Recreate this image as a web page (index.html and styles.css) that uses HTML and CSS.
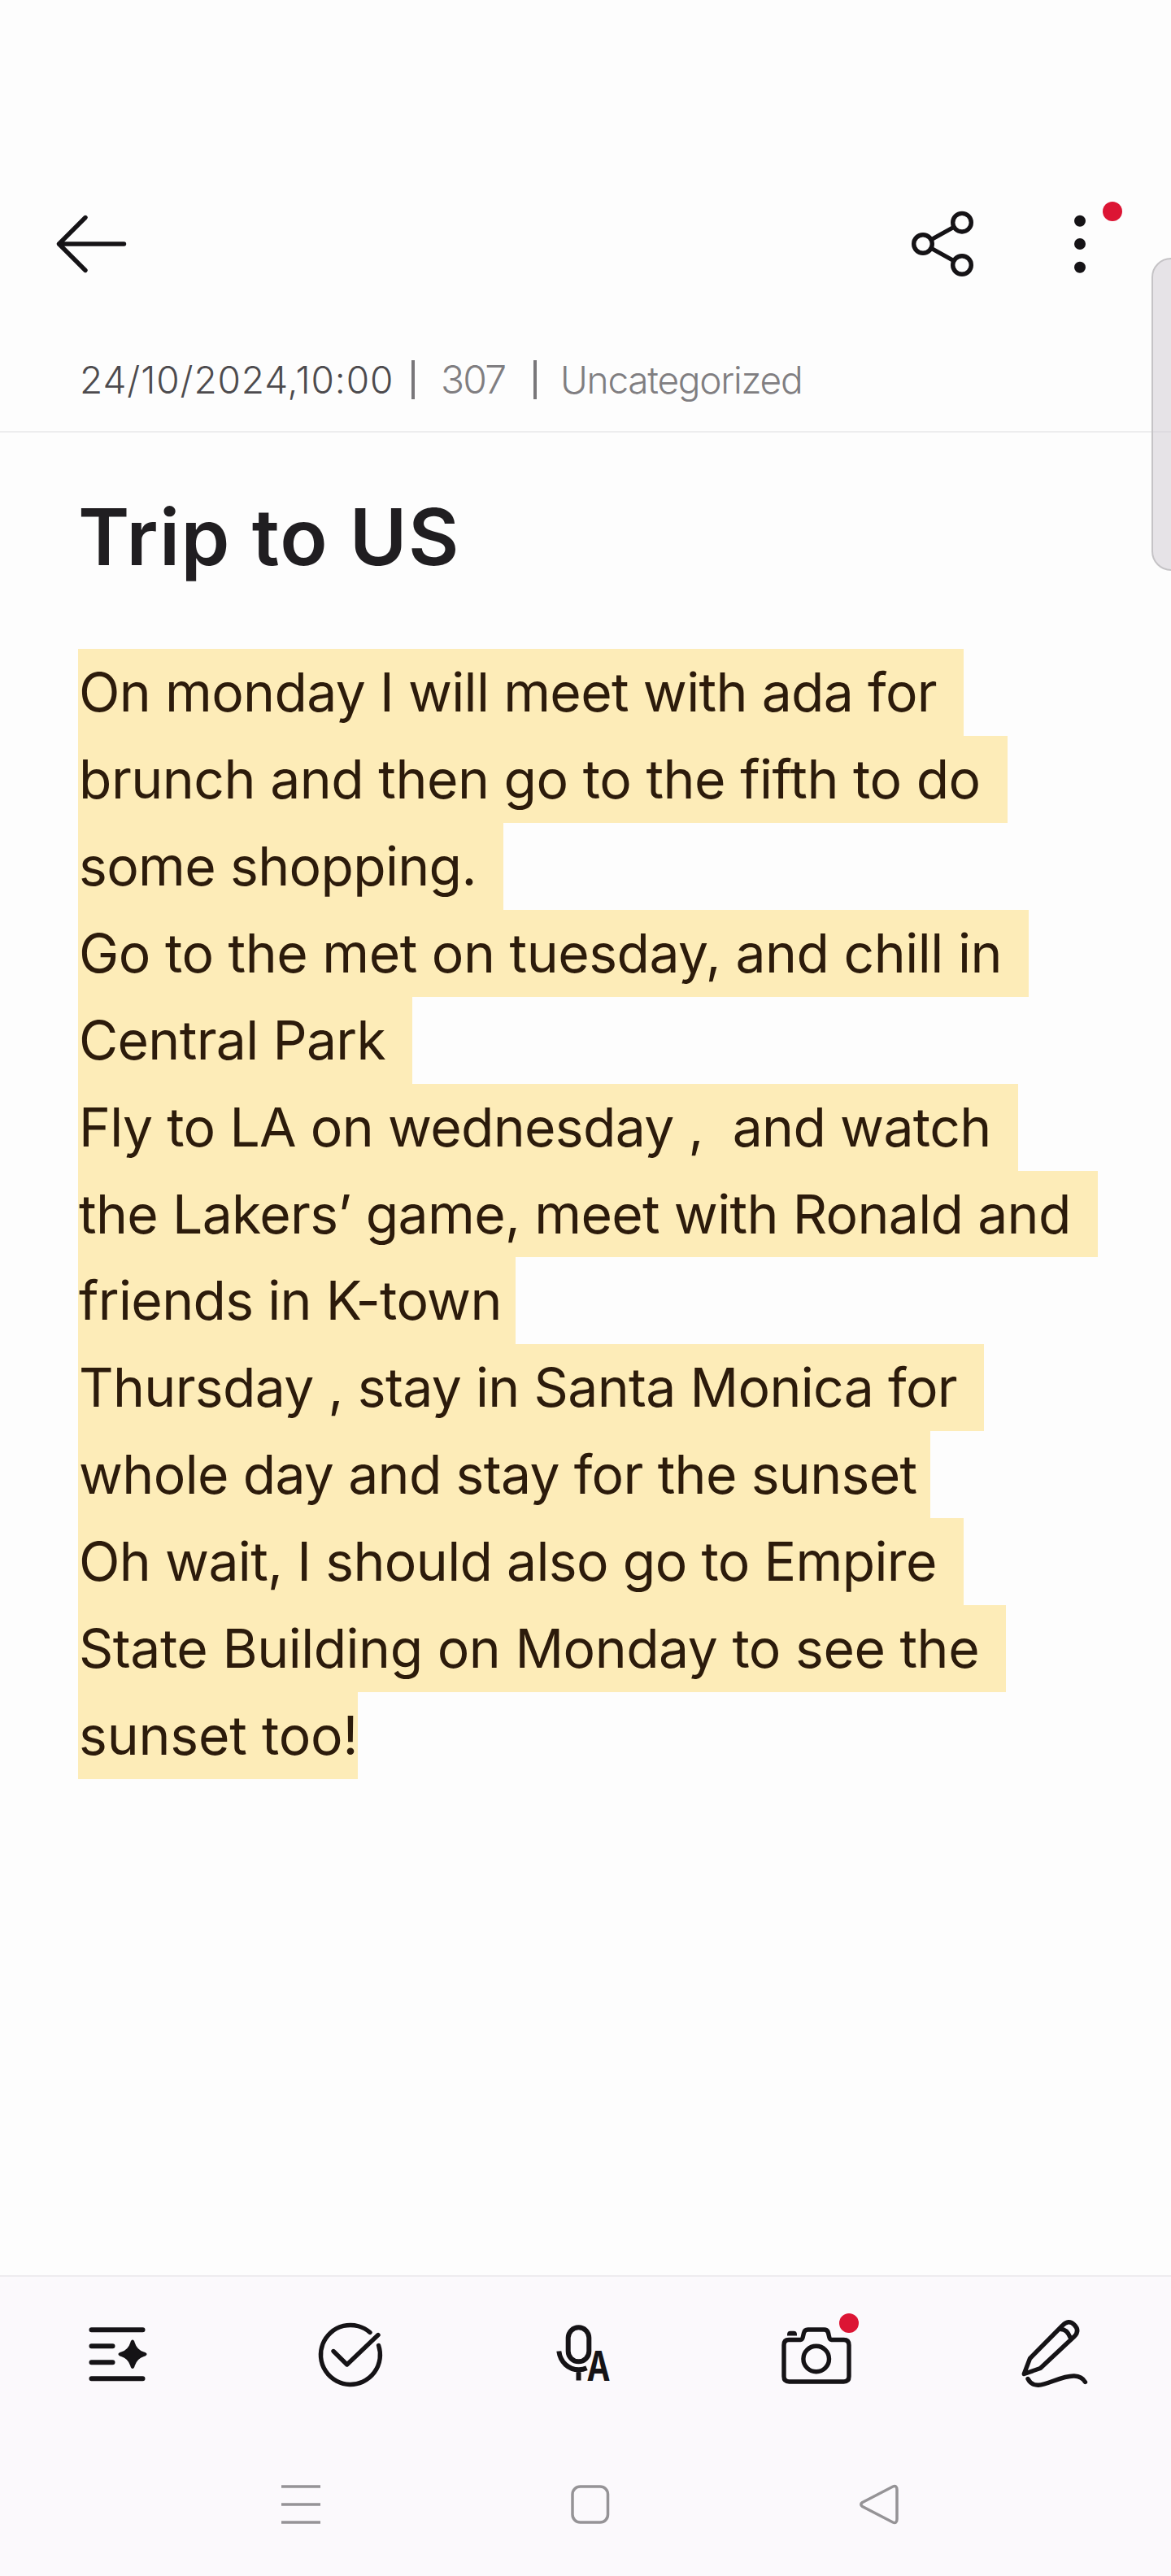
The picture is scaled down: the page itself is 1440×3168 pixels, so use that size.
FILE: index.html
```html
<!DOCTYPE html>
<html lang="en">
<head>
    <meta charset="UTF-8">
    <meta name="viewport" content="width=device-width, initial-scale=1.0">
    <title>Trip to US</title>
    <link rel="stylesheet" href="styles.css">
</head>
<body>

    <div class="screen">
        <!-- Top bar -->
        <header class="top-bar">
            <button class="icon-button" aria-label="Back">
                <svg class="icon" viewBox="0 0 96 96">
                    <path class="line" d="M44 17.5 L11.5 50 L44 82.5 M11.5 50 H91.5" />
                </svg>
            </button>
            <div class="top-actions">
                <button class="icon-button" aria-label="Share">
                    <svg class="icon" viewBox="0 0 96 96">
                        <circle class="line" cx="24" cy="50" r="11.3" />
                        <circle class="line" cx="72" cy="23.7" r="11.3" />
                        <circle class="line" cx="72" cy="76" r="11.3" />
                        <path class="line" d="M34.5 44.5 L61.5 29.5 M34.5 55.5 L61.5 70.5" />
                    </svg>
                </button>
                <button class="icon-button" aria-label="More">
                    <svg class="icon" viewBox="0 0 96 96">
                        <circle cx="48" cy="21.7" r="7" />
                        <circle cx="48" cy="50" r="7" />
                        <circle cx="48" cy="78.7" r="7" />
                    </svg>
                    <span class="badge badge-more"></span>
                </button>
            </div>
        </header>

        <!-- Note info -->
        <div class="note-info">
            <span class="date">24/10/2024,10:00</span>
            <span class="separator"></span>
            <span class="count">307</span>
            <span class="separator"></span>
            <span class="category">Uncategorized</span>
        </div>

        <!-- Note content -->
        <main class="note">
            <h1>Trip to US</h1>
            <div class="note-text">
                <span>On monday I will meet with ada for</span>
                <span class="wide">brunch and then go to the fifth to do</span>
                <span>some shopping.</span>
                <span class="wide">Go to the met on tuesday, and chill in</span>
                <span>Central Park</span>
                <span>Fly to LA on wednesday ,&nbsp; and watch</span>
                <span>the Lakers’ game, meet with Ronald and</span>
                <span class="short">friends in K-town</span>
                <span>Thursday , stay in Santa Monica for</span>
                <span class="short">whole day and stay for the sunset</span>
                <span>Oh wait, I should also go to Empire</span>
                <span class="wide">State Building on Monday to see the</span>
                <span class="last">sunset too!</span>
            </div>
        </main>

        <!-- Bottom tools and system navigation -->
        <footer class="bottom">
            <div class="tools">
                <button class="icon-button" aria-label="Smart layout">
                    <svg class="icon bold" viewBox="0 0 96 96">
                        <path class="line" d="M16.5 17.3 H79.5 M16.5 37.3 H42.5 M16.5 57.3 H42.5 M16.5 77.3 H79.5" />
                        <path d="M67 29.5 Q69 29.5 69.7 33 Q72.5 42 81 44.6 Q84.5 45.5 84.5 47.3 Q84.5 49 81 50 Q72.5 52.6 69.7 61.6 Q69 65 67 65 Q65 65 64.3 61.6 Q61.5 52.6 53 50 Q49.5 49 49.5 47.3 Q49.5 45.5 53 44.6 Q61.5 42 64.3 33 Q65 29.5 67 29.5 Z" />
                    </svg>
                </button>
                <button class="icon-button" aria-label="Checklist">
                    <svg class="icon" viewBox="0 0 96 96">
                        <path class="line" d="M71 20.5 A36.5 36.5 0 1 0 81.6 36.5" />
                        <path class="line" d="M26 43.5 L42.7 60 L81 23.5" />
                    </svg>
                </button>
                <button class="icon-button" aria-label="Voice to text">
                    <svg class="icon bold" viewBox="0 0 96 96">
                        <rect class="line" x="26.7" y="14.3" width="25.6" height="42" rx="12.8" />
                        <path class="line flat" d="M15.3 43.5 C17 57 27 66.3 40 66.3 Q45 66.3 49.5 64.3 M39.5 66 V79.5" />
                        <text class="mic-letter" x="49.5" y="79.5" textLength="29" lengthAdjust="spacingAndGlyphs">A</text>
                    </svg>
                </button>
                <button class="icon-button" aria-label="Camera">
                    <svg class="icon" viewBox="0 0 96 96">
                        <path class="line" d="M10 29.5 H24.5 Q26.5 29.5 27.2 26.5 L28.5 21 Q29.5 17 33.5 17 H53.5 Q57.5 17 58.5 21 L59.8 26.5 Q60.5 29.5 62.5 29.5 H77.5 Q84 29.5 84 36 V74.5 Q84 81 77.5 81 H10.5 Q4 81 4 74.5 V36 Q4 29.5 10 29.5 Z" />
                        <circle class="line" cx="43.7" cy="53" r="15.8" />
                        <path d="M8 24.5 V23 Q8 18.7 12 18.7 H16 Q20 18.7 20 23 V24.5 Z" />
                    </svg>
                    <span class="badge badge-camera"></span>
                </button>
                <button class="icon-button" aria-label="Handwriting">
                    <svg class="icon" viewBox="0 0 96 96">
                        <path class="line" d="M11.3 71.5 L18.5 52.5 L58.5 12 Q66 4 73 11 Q80 18 73.5 25 L31.3 64.5 Z" />
                        <path class="line" d="M56.5 16.5 Q64 16.5 68 26.5" />
                        <path class="line" d="M16 77.5 Q20 85.5 29 85.3 C41 84.5 58 73.5 73 74 Q82.5 74.5 86.5 81.5" />
                    </svg>
                </button>
            </div>
            <nav class="system-nav">
                <svg class="nav-icon" viewBox="0 0 60 60">
                    <path d="M6 8 H54 M6 30 H54 M6 52 H54" />
                </svg>
                <svg class="nav-icon" viewBox="0 0 60 60">
                    <rect x="8" y="8" width="43.5" height="44" rx="9.5" />
                </svg>
                <svg class="nav-icon" viewBox="0 0 60 60">
                    <path d="M8.5 27.5 L46 8 Q51 6 51 12 V48 Q51 54 46 52 L8.5 32.5 Q5 30 8.5 27.5 Z" />
                </svg>
            </nav>
        </footer>

        <div class="scroll-thumb"></div>
    </div>

</body>
</html>
```
FILE: styles.css
```css
/* General Styles */
* {
    box-sizing: border-box;
}

body {
    margin: 0;
    background-color: #fdfdfd;
    color: #201e21;
    font-family: Inter, "Liberation Sans", sans-serif;
}

.screen {
    position: relative;
    display: flex;
    flex-direction: column;
    width: 1440px;
    height: 3168px;
    overflow: hidden;
}

/* Icons */
.icon-button {
    position: relative;
    width: 96px;
    height: 96px;
    padding: 0;
    border: none;
    background: none;
}

.icon {
    display: block;
    width: 96px;
    height: 96px;
    fill: #151316;
}

.line {
    fill: none;
    stroke: #151316;
    stroke-width: 5.4;
    stroke-linecap: round;
    stroke-linejoin: round;
}

.bold .line {
    stroke-width: 6;
}

.bold .flat {
    stroke-linecap: butt;
}

.mic-letter {
    font-family: Inter, sans-serif;
    font-size: 51px;
    font-weight: 700;
}

.badge {
    position: absolute;
    width: 24px;
    height: 24px;
    border-radius: 50%;
    background-color: #dc1534;
}

.badge-more {
    top: -2px;
    right: -4px;
}

.badge-camera {
    top: -3px;
    right: 0;
}

/* Top bar */
.top-bar {
    display: flex;
    justify-content: space-between;
    align-items: flex-end;
    height: 346px;
    padding: 0 64px 0 61px;
}

.top-actions {
    display: flex;
    gap: 73px;
}

/* Note info */
.note-info {
    display: flex;
    align-items: center;
    height: 186px;
    padding: 58px 98px 0;
    border-bottom: 2px solid #ededee;
    color: #807e81;
    font-size: 46px;
    font-weight: 350;
    line-height: 1;
}

.date {
    width: 388px;
    color: #4d4b4e;
    letter-spacing: 0.9px;
}

.separator {
    width: 4px;
    height: 48px;
    background-color: #79777a;
}

.date + .separator {
    margin: 0 32px 0 20px;
}

.count {
    width: 81px;
    font-size: 48px;
    letter-spacing: -1.8px;
}

.count + .separator {
    margin: 0 29px 0 33px;
}

.category {
    letter-spacing: -1.25px;
}

/* Note content */
.note {
    flex: 1;
    padding: 61px 90px 0 96px;
}

h1 {
    margin: 0 0 71px;
    font-size: 96px;
    font-weight: 600;
    line-height: 134px;
    letter-spacing: 1.5px;
}

.note-text {
    display: flex;
    flex-direction: column;
    align-items: flex-start;
    color: #2c1b0b;
    font-size: 66px;
    line-height: 106.92px;
    letter-spacing: -0.66px;
    white-space: nowrap;
}

.note-text span {
    padding: 0 33px 0 1px;
    background-color: #fdecb8;
}

.note-text .wide {
    letter-spacing: -0.48px;
}

.note-text .short {
    padding-right: 17px;
}

.note-text .last {
    padding-right: 0;
    letter-spacing: -0.2px;
}

/* Bottom bar */
.bottom {
    height: 370px;
    padding-top: 48px;
    border-top: 2px solid #eeecef;
    background-color: #fbf9fc;
}

.tools {
    display: grid;
    grid-template-columns: repeat(5, 288px);
    justify-items: center;
}

.system-nav {
    display: flex;
    justify-content: space-between;
    padding: 106px 328px 0 340px;
}

.nav-icon {
    width: 60px;
    height: 60px;
    fill: none;
    stroke: #959396;
    stroke-width: 3.5;
}

/* Scroll thumb */
.scroll-thumb {
    position: absolute;
    top: 317px;
    right: -24px;
    width: 48px;
    height: 385px;
    border: 2px solid #c5c3c6;
    border-radius: 24px;
    background-color: rgba(208, 202, 210, 0.5);
}
```
